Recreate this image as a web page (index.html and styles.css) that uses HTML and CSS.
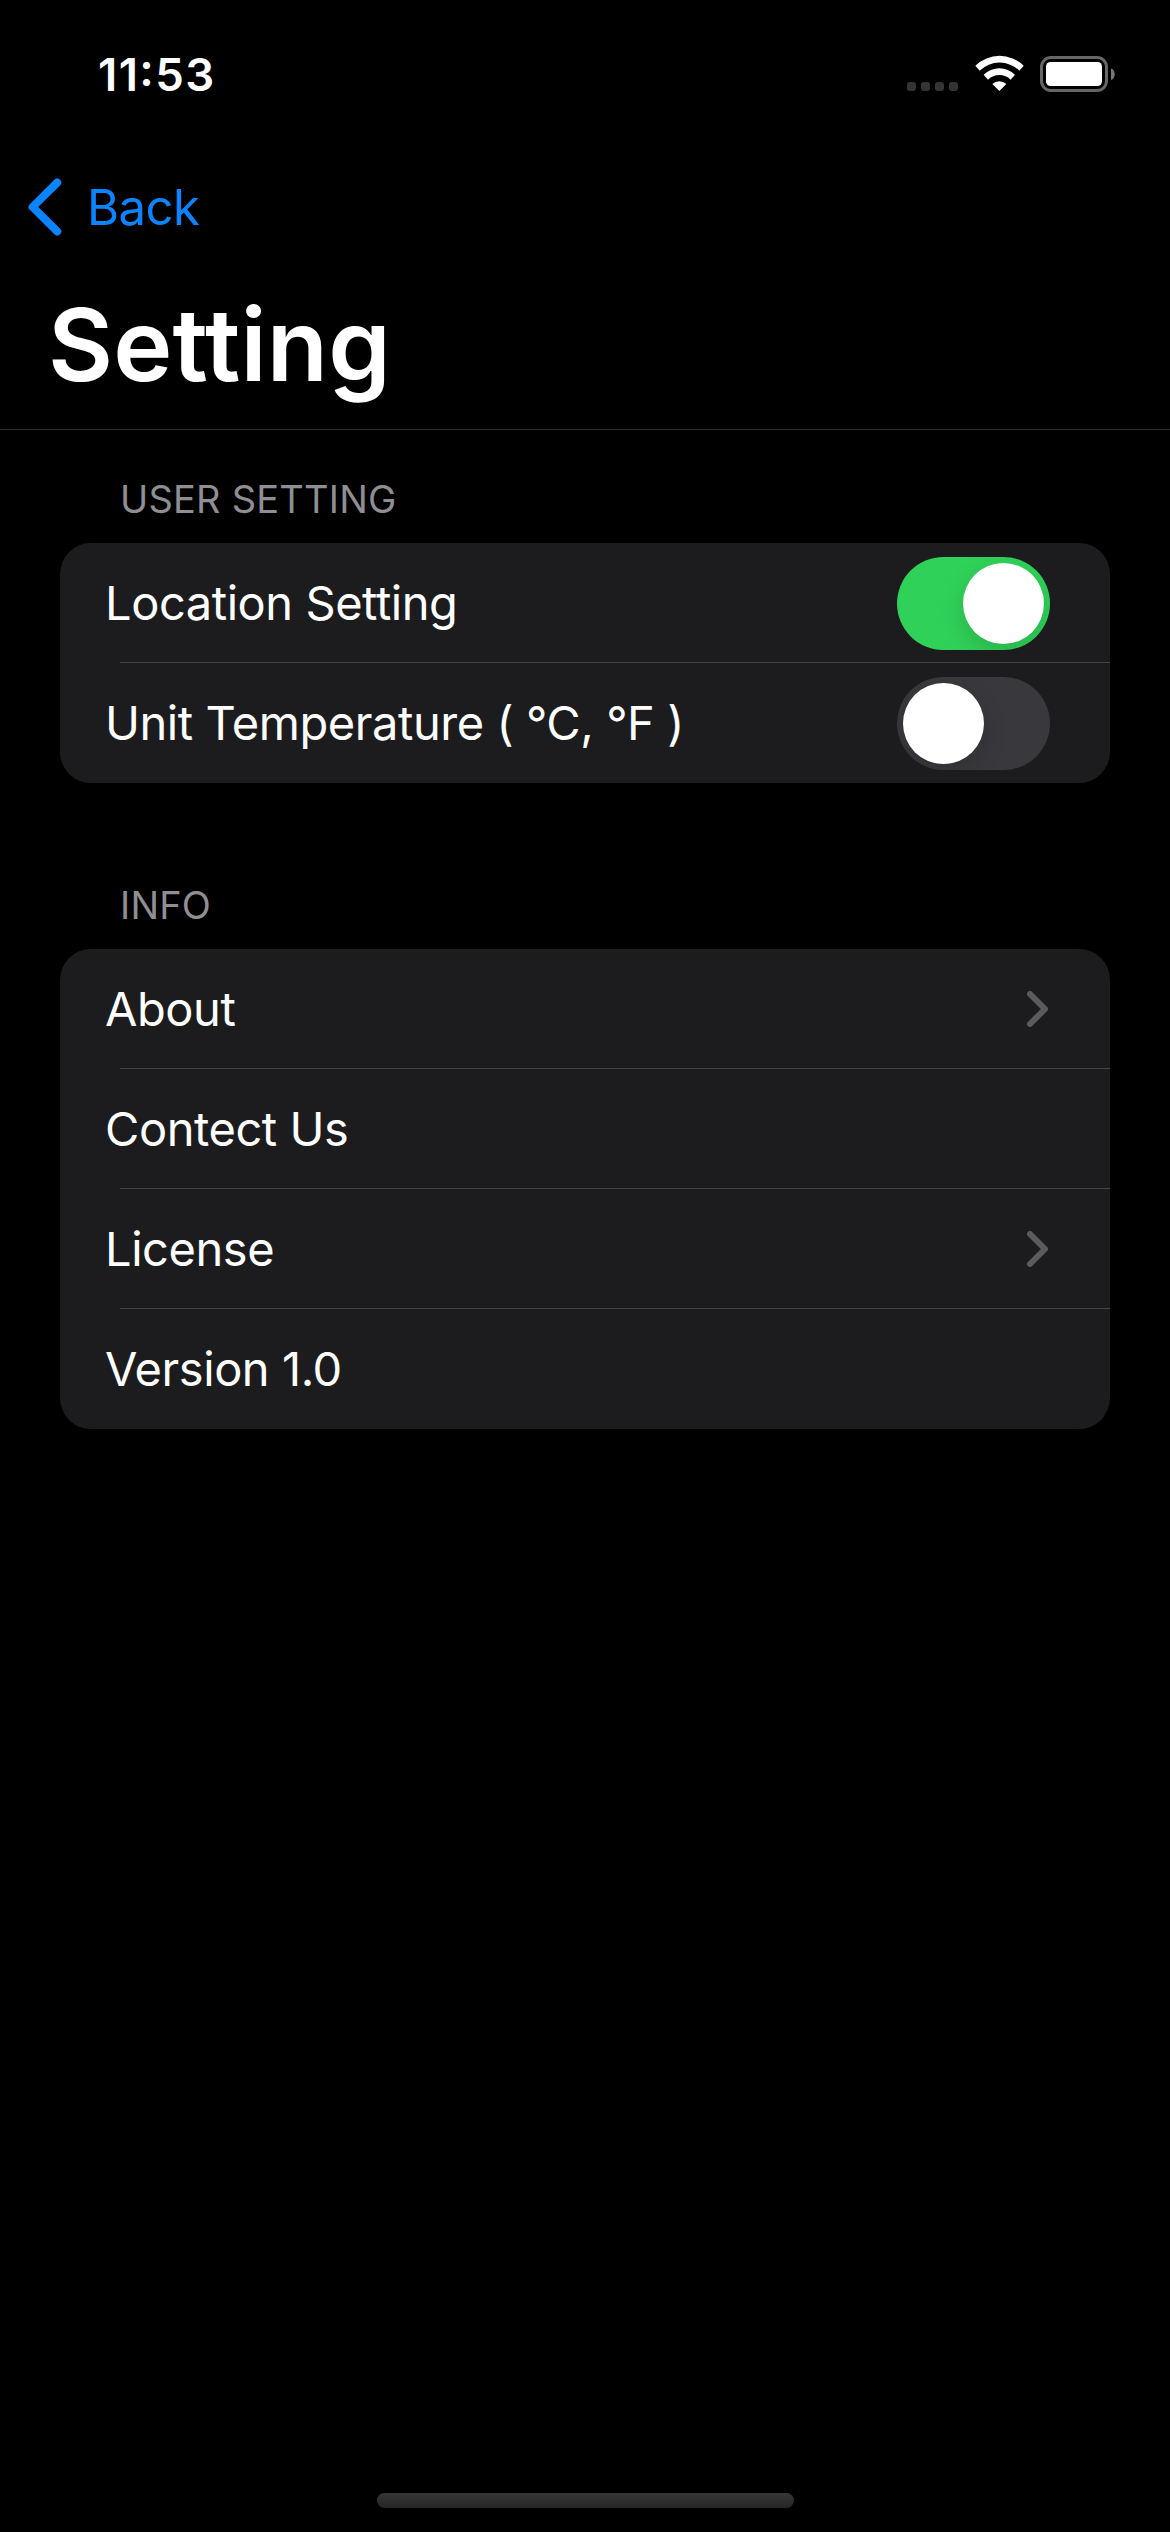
FILE: index.html
```html
<!DOCTYPE html>
<html lang="en">
<head>
<meta charset="utf-8">
<title>Setting</title>
<link rel="stylesheet" href="styles.css">
</head>
<body>
<header class="status">
  <span class="time">11:53</span>
  <div class="indicators">
    <span class="dots"><i></i><i></i><i></i><i></i></span>
    <svg class="wifi" viewBox="285 45 145 108">
      <path d="M285 77A104 104 0 0 1 430 77L417 92A85 85 0 0 0 298 92ZM310 104A67 67 0 0 1 404 104L391 119A49 49 0 0 0 323 119ZM336 132A31 31 0 0 1 378 132L357 153Z"/>
    </svg>
    <svg class="battery" viewBox="0 0 76 36">
      <rect class="shell" x="1.5" y="1.5" width="65" height="33" rx="9.5"/>
      <rect class="charge" x="6" y="6" width="56" height="24" rx="4.5"/>
      <path class="cap" d="M71 12.500C76 14 76 22.500 71 24Z"/>
    </svg>
  </div>
</header>
<nav class="nav">
  <svg class="back-icon" viewBox="0 0 34 58"><path d="M29.200 4.600L4.600 29L29.200 53.400"/></svg>
  <a class="back">Back</a>
</nav>
<h1 class="title">Setting</h1>
<main>
  <section>
    <h2 class="caption">USER SETTING</h2>
    <ul class="card">
      <li class="row"><span>Location Setting</span><span class="switch on"><i></i></span></li>
      <li class="row"><span>Unit Temperature ( °C, °F )</span><span class="switch"><i></i></span></li>
    </ul>
  </section>
  <section>
    <h2 class="caption">INFO</h2>
    <ul class="card">
      <li class="row"><span>About</span><svg class="chevron" viewBox="0 0 22 36"><path d="M3 3L18 18L3 33"/></svg></li>
      <li class="row"><span>Contect Us</span></li>
      <li class="row"><span>License</span><svg class="chevron" viewBox="0 0 22 36"><path d="M3 3L18 18L3 33"/></svg></li>
      <li class="row"><span>Version 1.0</span></li>
    </ul>
  </section>
</main>
<div class="home"></div>
</body>
</html>
```
FILE: styles.css
```css
* { box-sizing: border-box; margin: 0; padding: 0; }

body {
  display: flex;
  flex-direction: column;
  width: 1170px;
  height: 2532px;
  background: #000;
  color: #fff;
  font-family: Inter, "Liberation Sans", sans-serif;
  overflow: hidden;
}

.status {
  display: flex;
  justify-content: space-between;
  align-items: flex-start;
  height: 141px;
  padding: 55px 54px 0 98px;
}
.time {
  font-size: 45.5px;
  font-weight: 600;
  line-height: 39px;
  letter-spacing: 1.4px;
  font-feature-settings: "case";
}
.indicators { display: flex; align-items: flex-start; }
.dots { display: flex; gap: 5px; margin: 27px 17px 0 0; }
.dots i { width: 9px; height: 9px; border-radius: 3px; background: #343434; }
.wifi { width: 49px; height: 36px; margin-right: 16px; fill: #fff; }
.battery { width: 76px; height: 36px; margin-top: 1px; }
.shell { fill: none; stroke: #666; stroke-width: 3; }
.charge { fill: #fff; }
.cap { fill: #777; }

.nav {
  display: flex;
  align-items: center;
  height: 132px;
  padding-left: 28px;
  color: #0a84ff;
}
.back-icon { width: 34px; height: 58px; fill: none; stroke: #0a84ff; stroke-width: 8; stroke-linecap: round; stroke-linejoin: round; }
.back { margin-left: 25px; font-size: 49px; letter-spacing: -.5px; }

.title {
  height: 157px;
  padding: 10px 0 0 48px;
  border-bottom: 1px solid #29292b;
  font-size: 100px;
  font-weight: 600;
  line-height: 123px;
  letter-spacing: .2px;
}

main { padding: 44px 60px 0; }
section + section { margin-top: 97px; }
.caption {
  padding: 0 60px;
  margin-bottom: 19px;
  color: #8e8e93;
  font-size: 38px;
  font-weight: 400;
  line-height: 50px;
  letter-spacing: .2px;
}
.card { list-style: none; border-radius: 31px; background: #1c1c1e; overflow: hidden; }
.row {
  display: flex;
  align-items: center;
  justify-content: space-between;
  height: 120px;
  padding: 0 60px 0 45px;
  font-size: 47px;
  line-height: 120px;
  letter-spacing: -.44px;
}
.row:not(:last-child) {
  background: linear-gradient(#444447, #444447) 60px 119px / 100% 1px no-repeat;
}
.switch { display: flex; width: 153px; height: 93px; padding: 6px; border-radius: 47px; background: #39393d; overflow: hidden; }
.switch i { width: 81px; height: 81px; border-radius: 50%; background: #fff; box-shadow: 0 9px 24px rgba(0, 0, 0, .15); }
.switch.on { justify-content: flex-end; background: #30d158; }
.chevron { width: 22px; height: 36px; margin-right: 1px; fill: none; stroke: #5a5a5f; stroke-width: 6; stroke-linecap: round; stroke-linejoin: round; }

.home {
  width: 417px;
  height: 15px;
  margin: auto 0 24px 377px;
  border-radius: 7.5px;
  background: linear-gradient(#363636, #262626);
}
```
